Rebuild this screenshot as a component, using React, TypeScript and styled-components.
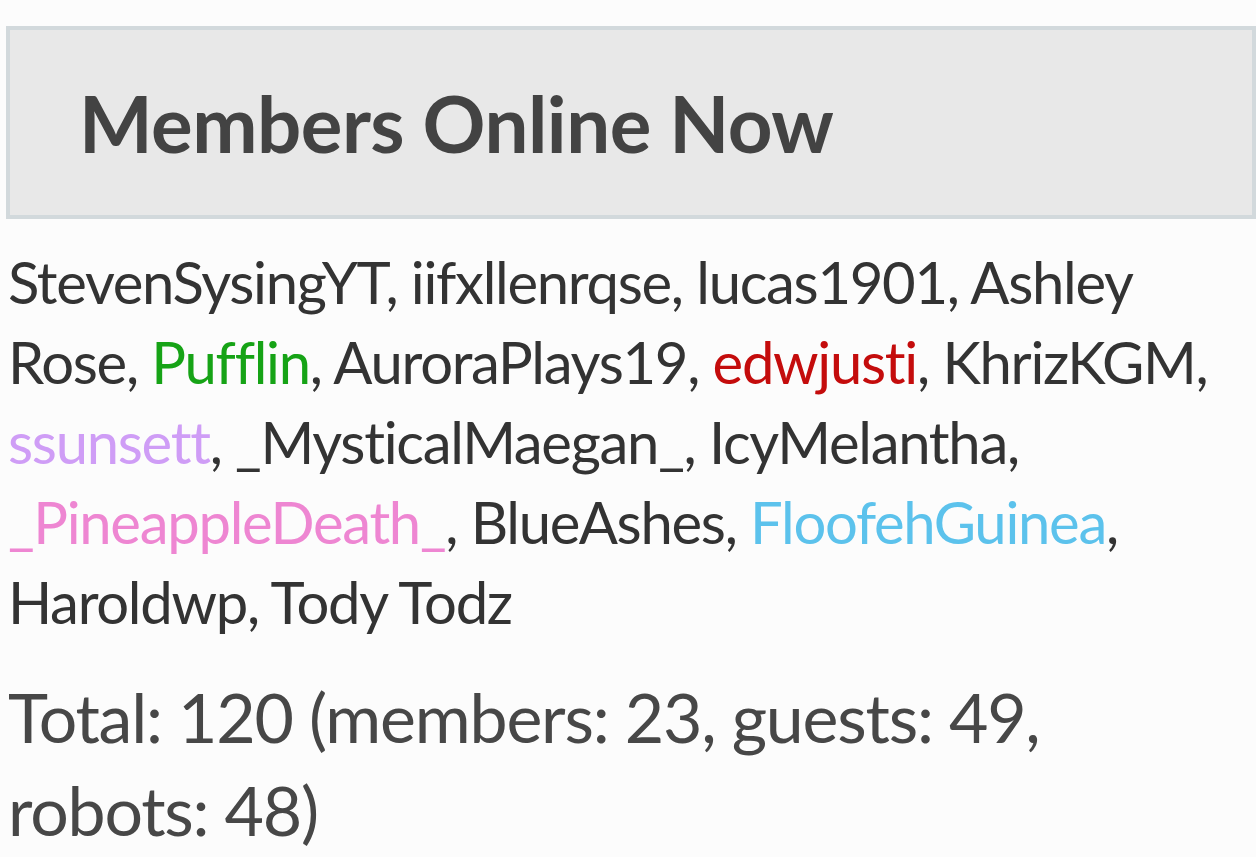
import React from 'react'
import styled, { createGlobalStyle } from 'styled-components'

const GlobalStyle = createGlobalStyle`
  body {
    margin: 0;
    background: #fcfcfc;
    font-family: Lato, "Open Sans", sans-serif;
  }
`;

type Member = { name: string; color?: string };

const members: Member[] = [
  { name: 'StevenSysingYT' },
  { name: 'iifxllenrqse' },
  { name: 'lucas1901' },
  { name: 'Ashley Rose' },
  { name: 'Pufflin', color: '#16a316' },
  { name: 'AuroraPlays19' },
  { name: 'edwjusti', color: '#c40c0c' },
  { name: 'KhrizKGM' },
  { name: 'ssunsett', color: '#cf9df6' },
  { name: '_MysticalMaegan_' },
  { name: 'IcyMelantha' },
  { name: '_PineappleDeath_', color: '#ee86d2' },
  { name: 'BlueAshes' },
  { name: 'FloofehGuinea', color: '#5cc2ec' },
  { name: 'Haroldwp' },
  { name: 'Tody Todz' },
];

const App = () => {
  return (
    <Page>
      <GlobalStyle />
      <Header>
        <Title>Members Online Now</Title>
      </Header>
      <MemberList>
        {members.map((m, i) => (
          <React.Fragment key={m.name}>
            <MemberName color={m.color}>{m.name}</MemberName>
            {i < members.length - 1 ? ', ' : ''}
          </React.Fragment>
        ))}
      </MemberList>
      <Totals>Total: 120 (members: 23, guests: 49, robots: 48)</Totals>
    </Page>
  );
};

export default App;

const Page = styled.div`
  padding: 26px 0 0 6px;
  min-height: 857px;
  box-sizing: border-box;
`;

const Header = styled.div`
  display: flex;
  align-items: center;
  height: 193px;
  box-sizing: border-box;
  background-color: #e8e8e8;
  border: 4px solid #d2d9dc;
  padding-left: 69px;
`;

const Title = styled.h2`
  margin: 0;
  font-size: 78px;
  font-weight: 700;
  color: #434343;
  letter-spacing: -0.5px;
`;

const MemberList = styled.div`
  margin: 23px 0 0 2px;
  font-size: 58px;
  line-height: 80px;
  letter-spacing: -1.3px;
  color: #333333;
`;

const MemberName = styled.span<{ color?: string }>`
  color: ${props => props.color || 'inherit'};
`;

const Totals = styled.div`
  margin: 28px 0 0 2px;
  font-size: 68px;
  line-height: 93px;
  letter-spacing: -1.2px;
  color: #474747;
`;
